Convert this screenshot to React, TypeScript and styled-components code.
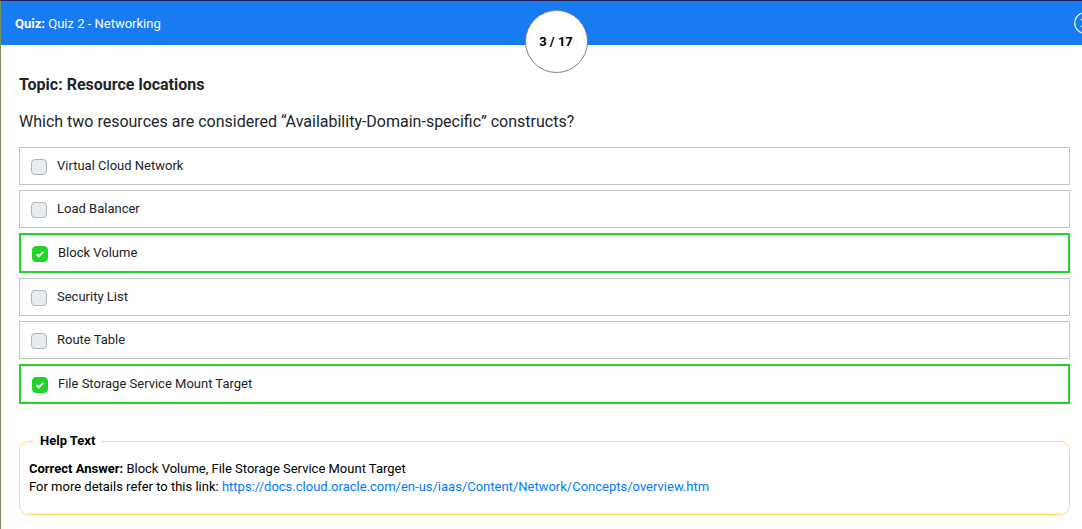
import React from "react";
import styled, { createGlobalStyle } from "styled-components";

const GlobalStyle = createGlobalStyle`
  *, *::before, *::after { box-sizing: border-box; }
  html { overflow: hidden; }
  body {
    margin: 0;
    background: #fff;
    color: #212529;
    font-family: Roboto, "Liberation Sans", sans-serif;
    font-size: 13px;
    line-height: 18px;
  }
`;

const Page = styled.div`
  min-height: 100vh;
  border-top: 1px solid #24215c;
  border-left: 1px solid #789060;
`;

const Header = styled.header`
  position: relative;
  display: flex;
  align-items: center;
  justify-content: space-between;
  height: 44px;
  padding-left: 14px;
  background: #177bf2;
  color: #fff;
`;

const QuizName = styled.div`
  padding-top: 2px;
  font-size: 13px;
`;

const CloseButton = styled.button`
  display: block;
  flex: none;
  width: 22px;
  height: 22px;
  margin: 0 -14px 0 0;
  padding: 0;
  border: 0;
  background: none;
  color: #e6f1ff;

  svg { display: block; }
`;

const Counter = styled.div`
  position: absolute;
  top: 9px;
  left: 50%;
  margin-left: -17px;
  display: flex;
  align-items: center;
  justify-content: center;
  width: 63px;
  height: 63px;
  border: 1px solid #808080;
  border-radius: 50%;
  background: #fff;
  color: #000;
  font-size: 13px;
  font-weight: 700;
`;

const Content = styled.main`
  padding: 28px 12px 14px 18px;
`;

const Topic = styled.h1`
  margin: 0 0 13px;
  font-size: 16px;
  line-height: 24px;
  font-weight: 700;
`;

const Question = styled.p`
  margin: 0 0 13px;
  font-size: 16px;
  line-height: 24px;
`;

const Options = styled.div`
  display: flex;
  flex-direction: column;
  gap: 5px;
`;

const Option = styled.label<{ $correct: boolean }>`
  display: flex;
  align-items: flex-start;
  height: ${(p) => (p.$correct ? 40 : 38)}px;
  padding: 8px 11px;
  border: ${(p) => (p.$correct ? "2px solid #20d42a" : "1px solid #c4c4c4")};
  line-height: 20px;
`;

const Box = styled.span`
  position: relative;
  display: block;
  width: 16px;
  height: 16px;
  margin: 3px 10px 0 0;

  svg {
    position: absolute;
    inset: 0;
    pointer-events: none;
  }
`;

const Check = styled.input`
  display: block;
  appearance: none;
  width: 16px;
  height: 16px;
  margin: 0;
  border: 1px solid #adb5bd;
  border-radius: 4px;
  background: #e9ecef;

  &:checked {
    border-color: #20d42a;
    background: #20d42a;
  }
`;

const Help = styled.fieldset`
  min-width: 0;
  margin: 28px 0 0;
  padding: 10px 9px 18px;
  border: 1px solid #ffd763;
  border-radius: 10px;
  color: #000;
`;

const Legend = styled.legend`
  margin-left: 5px;
  padding: 0 6px;
  font-weight: 700;
`;

const Line = styled.p`
  margin: 0;
`;

const Link = styled.a`
  color: #007bff;
  text-decoration: none;
`;

const answers = [
  { text: "Virtual Cloud Network", correct: false },
  { text: "Load Balancer", correct: false },
  { text: "Block Volume", correct: true },
  { text: "Security List", correct: false },
  { text: "Route Table", correct: false },
  { text: "File Storage Service Mount Target", correct: true },
];

export default function App() {
  return (
    <>
      <GlobalStyle />
      <Page>
        <Header>
          <QuizName>
            <b>Quiz:</b> Quiz 2 - Networking
          </QuizName>
          <Counter>3 / 17</Counter>
          <CloseButton type="button" aria-label="Close quiz">
            <svg width="22" height="22" viewBox="0 0 22 22" fill="none" stroke="currentColor">
              <circle cx="11" cy="11" r="10.3" strokeWidth="1.2" />
              <path d="M7 7l8 8M15 7l-8 8" strokeWidth="1.5" />
            </svg>
          </CloseButton>
        </Header>
        <Content>
          <Topic>Topic: Resource locations</Topic>
          <Question>
            Which two resources are considered “Availability-Domain-specific” constructs?
          </Question>
          <Options>
            {answers.map((a) => (
              <Option key={a.text} $correct={a.correct}>
                <Box>
                  <Check type="checkbox" defaultChecked={a.correct} disabled />
                  {a.correct && (
                    <svg width="16" height="16" viewBox="0 0 16 16" fill="none" stroke="#fff">
                      <path d="M4.7 8.2l2.1 2.1 4.6-4.4" strokeWidth="2" />
                    </svg>
                  )}
                </Box>
                {a.text}
              </Option>
            ))}
          </Options>
          <Help>
            <Legend>Help Text</Legend>
            <Line>
              <b>Correct Answer:</b> Block Volume, File Storage Service Mount Target
            </Line>
            <Line>
              For more details refer to this link:{" "}
              <Link href="https://docs.cloud.oracle.com/en-us/iaas/Content/Network/Concepts/overview.htm">
                https://docs.cloud.oracle.com/en-us/iaas/Content/Network/Concepts/overview.htm
              </Link>
            </Line>
          </Help>
        </Content>
      </Page>
    </>
  );
}
